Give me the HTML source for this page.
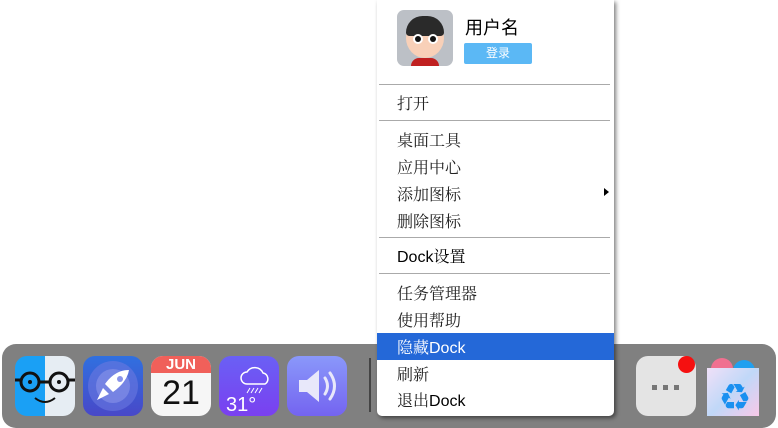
<!DOCTYPE html><html><head><style>
body{margin:0;width:778px;height:428px;background:#fff;position:relative;overflow:hidden;font-family:"Liberation Sans","Noto Sans CJK SC",sans-serif}
.dock{position:absolute;left:2px;top:344px;width:774px;height:84px;background:#808080;border-radius:14px}
.ic{position:absolute;top:356px;width:60px;height:60px;border-radius:12px;overflow:hidden}
.menu{position:absolute;left:377px;top:0;width:237px;height:416px;background:#fff;border-radius:0 0 5px 5px;box-shadow:2px 2px 4px rgba(0,0,0,.5)}
.it{position:absolute;left:20px;font-size:16px;color:#222;line-height:20px;font-family:"Liberation Sans","Noto Serif CJK SC",serif}
.hr{position:absolute;left:2px;right:4px;height:1px;background:#aaa}
</style></head><body>
<div class="dock"></div>
<div class="ic" style="left:15px;background:linear-gradient(90deg,#1aa0f5 50%,#e6edf3 50%)">
<svg width="60" height="60"><g fill="none" stroke="#111" stroke-width="3"><circle cx="15" cy="26" r="9"/><circle cx="44" cy="26" r="9"/><path d="M24 26h11M0 24h6M53 24h7"/><path d="M20 42q10 8 20 0" stroke-width="2"/></g><circle cx="15" cy="26" r="2" fill="#111"/><circle cx="44" cy="26" r="2" fill="#111"/></svg></div>
<div class="ic" style="left:83px;background:linear-gradient(#3070e0,#4848c8)"><svg width="60" height="60"><circle cx="30" cy="30" r="25" fill="#6a78e0" opacity=".6"/><circle cx="30" cy="30" r="17" fill="#8a94ea" opacity=".6"/><path d="M46 14q-14 0-24 14l8 8q14-10 16-22zM20 32l-6 12 12-6z" fill="#fff"/><circle cx="37" cy="23" r="3" fill="#8a94ea"/></svg></div>
<div class="ic" style="left:151px;background:#f6f6f6"><div style="height:17px;background:#f0605a;color:#fff;font-size:15px;font-weight:bold;text-align:center;line-height:18px">JUN</div><div style="text-align:center;font-size:34px;line-height:40px;color:#111">21</div></div>
<div class="ic" style="left:219px;background:linear-gradient(#6a60f5,#7a40f0)"><svg width="60" height="60"><path d="M28 28h18a6 6 0 0 0-2-11 9 9 0 0 0-16-1 6 6 0 0 0 0 12z" fill="none" stroke="#fff" stroke-width="1.5"/><path d="M31 32l-3 5M35 32l-3 5M39 32l-3 5M43 32l-3 5" stroke="#fff"/><text x="7" y="55" font-size="20" fill="#fff" font-family="Liberation Sans">31°</text></svg></div>
<div class="ic" style="left:287px;background:linear-gradient(#8a98fa,#7464f0)"><svg width="60" height="60"><path d="M12 24h8l12-10v32l-12-10h-8z" fill="#e8e8fa"/><path d="M38 22q5 8 0 16M43 17q9 13 0 26" fill="none" stroke="#e8e8fa" stroke-width="3" stroke-linecap="round"/></svg></div>
<div style="position:absolute;left:369px;top:358px;width:2px;height:54px;background:#444"></div>
<div class="ic" style="left:636px;top:356px;background:#e4e4e4"><svg width="60" height="60"><rect x="16" y="29" width="5" height="5" fill="#777"/><rect x="27" y="29" width="5" height="5" fill="#777"/><rect x="38" y="29" width="5" height="5" fill="#777"/></svg></div>
<div style="position:absolute;left:678px;top:356px;width:17px;height:17px;border-radius:50%;background:#f51010"></div>
<div style="position:absolute;left:707px;top:358px;width:52px;height:58px">
<div style="position:absolute;left:4px;top:0;width:22px;height:14px;border-radius:11px 11px 0 0;background:#f07090"></div>
<div style="position:absolute;left:26px;top:2px;width:22px;height:14px;border-radius:11px 11px 0 0;background:#20a0f0"></div>
<div style="position:absolute;left:0;top:10px;width:52px;height:48px;background:linear-gradient(135deg,#f0e0f8,#c0d8f8,#f8c8e8)"></div>
<div style="position:absolute;left:14px;top:18px;font-size:28px;color:#1a90f0">♻</div></div>
<div class="menu">
<div style="position:absolute;left:20px;top:10px;width:56px;height:56px;border-radius:7px;background:#bcc0c6;overflow:hidden">
<div style="position:absolute;left:9px;top:8px;width:38px;height:40px;border-radius:50%;background:#f8d0b8"></div>
<div style="position:absolute;left:9px;top:6px;width:38px;height:20px;border-radius:19px 19px 4px 4px;background:#2a2a2a"></div>
<div style="position:absolute;left:18px;top:26px;width:6px;height:6px;border-radius:50%;background:#111;box-shadow:0 0 0 2px #fff"></div>
<div style="position:absolute;left:33px;top:26px;width:6px;height:6px;border-radius:50%;background:#111;box-shadow:0 0 0 2px #fff"></div>
<div style="position:absolute;left:14px;top:48px;width:28px;height:12px;border-radius:8px 8px 0 0;background:#c02020"></div></div>
<div style="position:absolute;left:88px;top:14px;font-size:18px;color:#000">用户名</div>
<div style="position:absolute;left:87px;top:43px;width:68px;height:21px;background:#5bb8f5;border-radius:2px;color:#fff;font-size:12px;text-align:center;line-height:21px">登录</div>
<div class="hr" style="top:84px"></div>
<div class="it" style="top:95px">打开</div>
<div class="hr" style="top:120px"></div>
<div class="it" style="top:132px">桌面工具</div>
<div class="it" style="top:159px">应用中心</div>
<div class="it" style="top:186px">添加图标</div>
<div style="position:absolute;left:227px;top:188px;border-left:5px solid #000;border-top:4px solid transparent;border-bottom:4px solid transparent"></div>
<div class="it" style="top:213px">删除图标</div>
<div class="hr" style="top:237px"></div>
<div class="it" style="top:248px;color:#000">Dock设置</div>
<div class="hr" style="top:273px"></div>
<div class="it" style="top:285px">任务管理器</div>
<div class="it" style="top:312px">使用帮助</div>
<div style="position:absolute;left:0;width:237px;top:333px;height:27px;background:#2468d8"></div>
<div class="it" style="top:339px;color:#fff">隐藏Dock</div>
<div class="it" style="top:366px">刷新</div>
<div class="it" style="top:392px">退出<span style="color:#000">Dock</span></div>
</div>
</body></html>
